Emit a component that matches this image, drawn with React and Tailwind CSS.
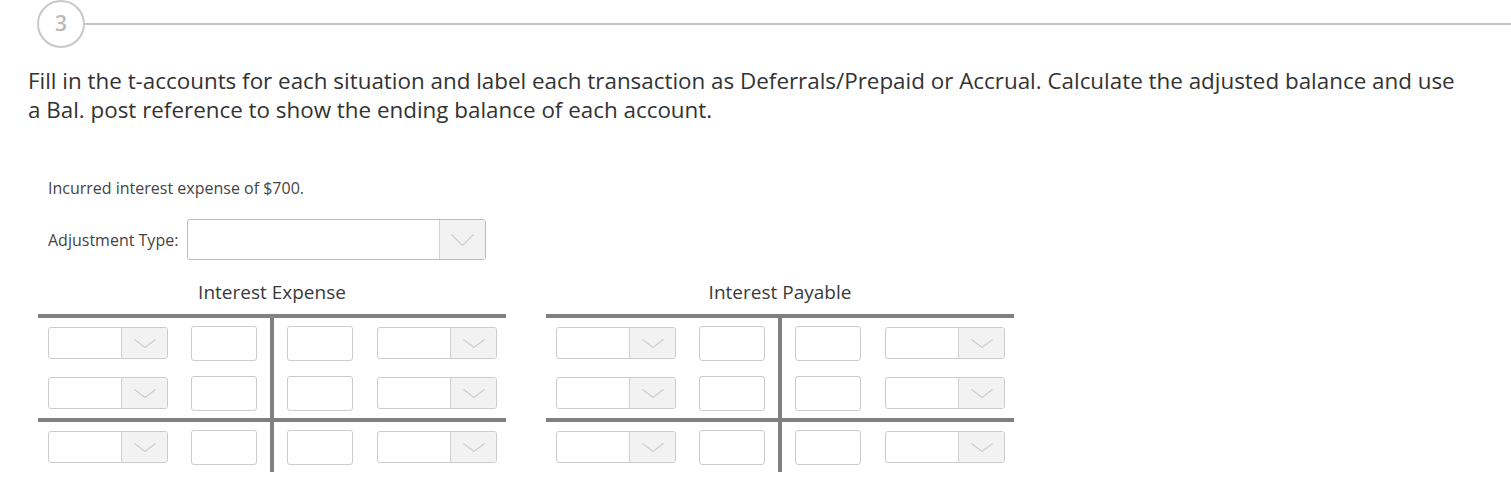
import React from "react";

function Chevron({ w = 20, h = 10 }) {
  return (
    <svg width={w} height={h} viewBox={`0 0 ${w} ${h}`} fill="none">
      <polyline points={`0.5,0.5 ${w / 2},${h - 0.5} ${w - 0.5},0.5`} stroke="#cdcdcd" strokeWidth="1.2" />
    </svg>
  );
}

function SmallSelect() {
  return (
    <div className="flex h-[32px] w-[120px] overflow-hidden rounded-[3px] border border-[#cccccc] bg-white">
      <div className="flex-1" />
      <div className="flex w-[46px] items-center justify-center border-l border-[#d2d2d2] bg-[#f2f2f2]">
        <Chevron w={22} h={9} />
      </div>
    </div>
  );
}

function SmallInput() {
  return <div className="h-[35px] w-[66px] rounded-[3px] border border-[#cccccc] bg-white" />;
}

function LeftRow() {
  return (
    <div className="flex h-[50px] items-center pl-[10px]">
      <SmallSelect />
      <div className="ml-[23px]">
        <SmallInput />
      </div>
    </div>
  );
}

function RightRow() {
  return (
    <div className="flex h-[50px] items-center pl-[13px]">
      <SmallInput />
      <div className="ml-[24px]">
        <SmallSelect />
      </div>
    </div>
  );
}

function TAccount({ title }) {
  return (
    <div className="w-[468px]">
      <div className="text-center text-[19px] leading-[24px] text-[#3a3a3a]">{title}</div>
      <div className="mt-[10px] border-t-4 border-[#808080]">
        <div className="flex">
          <div className="w-[232px]">
            <LeftRow />
            <LeftRow />
          </div>
          <div className="w-[4px] bg-[#808080]" />
          <div className="w-[232px]">
            <RightRow />
            <RightRow />
          </div>
        </div>
        <div className="h-[4px] bg-[#808080]" />
        <div className="flex">
          <div className="w-[232px]">
            <LeftRow />
          </div>
          <div className="w-[4px] bg-[#808080]" />
          <div className="w-[232px]">
            <RightRow />
          </div>
        </div>
      </div>
    </div>
  );
}

export default function App() {
  return (
    <div className="h-[494px] w-[1511px] overflow-hidden bg-white font-['Open_Sans',sans-serif]">
      <div className="flex h-[48px] items-center pl-[37px]">
        <div className="flex h-[48px] w-[48px] items-center justify-center rounded-full border-2 border-[#c8c8c8] text-[21px] font-semibold text-[#b8b8b8]">
          3
        </div>
        <div className="h-[2px] flex-1 bg-[#c4c4c4]" />
      </div>
      <p className="mt-[18px] w-[1462px] pl-[28px] text-[22.4px] leading-[29px] text-[#333333]">
        Fill in the t-accounts for each situation and label each transaction as Deferrals/Prepaid or Accrual. Calculate the adjusted balance and use a Bal. post reference to show the ending balance of each account.
      </p>
      <div className="pl-[38px]">
        <div className="mt-[54px] pl-[10px] text-[16px] leading-[20px] text-[#444444]">
          Incurred interest expense of $700.
        </div>
        <div className="mt-[21px] flex items-center pl-[10px]">
          <span className="text-[16px] leading-[20px] text-[#444444]">Adjustment Type:</span>
          <div className="ml-[9px] flex h-[41px] w-[299px] overflow-hidden rounded-[3px] border border-[#bdbdbd] bg-white">
            <div className="flex-1" />
            <div className="flex w-[46px] items-center justify-center border-l border-[#d2d2d2] bg-[#f2f2f2]">
              <Chevron w={23} h={12} />
            </div>
          </div>
        </div>
        <div className="mt-[20px] flex gap-[40px]">
          <TAccount title="Interest Expense" />
          <TAccount title="Interest Payable" />
        </div>
      </div>
    </div>
  );
}
